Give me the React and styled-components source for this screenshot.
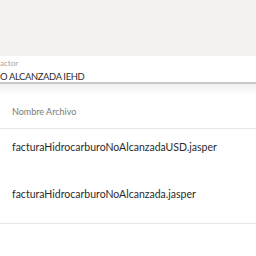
import React from 'react'
import styled, { createGlobalStyle } from 'styled-components'

const Global = createGlobalStyle`
  body {
    margin: 0;
    background: #ffffff;
    font-family: Lato, "Open Sans", sans-serif;
  }
`
const Page = styled.div`
  width: 256px;
  height: 256px;
  overflow: hidden;
  display: flex;
  flex-direction: column;
`
const TopBand = styled.div`
  height: 56px;
  background: #f4f2f0;
`
const Field = styled.div`
  height: 26px;
  background: #ffffff;
  border-bottom: 2px solid #c9c9c9;
  overflow: hidden;
  display: flex;
  flex-direction: column;
`
const FieldLabel = styled.div`
  margin-top: 2px;
  font-size: 8px;
  line-height: 10px;
  color: #a3a3a3;
  white-space: nowrap;
`
const FieldValue = styled.div`
  margin-top: 3px;
  font-size: 9.4px;
  letter-spacing: -0.35px;
  line-height: 12px;
  color: #2e2e2e;
  white-space: nowrap;
`
const Shade = styled.div`
  height: 11px;
  background: linear-gradient(#efefef, #ffffff);
`
const Table = styled.div`
  display: flex;
  flex-direction: column;
  border-bottom: 1px solid #e6e6e6;
`
const HeadRow = styled.div`
  height: 33px;
  padding-left: 12px;
  display: flex;
  align-items: center;
  border-bottom: 1px solid #e6e6e6;
  font-size: 9px;
  color: #7a7a7a;
`
const Row = styled.div`
  height: ${p => p.h}px;
  padding-left: 12px;
  display: flex;
  align-items: center;
  font-size: 10.5px;
  color: #2b2b2b;
  white-space: nowrap;
`

export default function App() {
  return (
    <Page>
      <Global />
      <TopBand />
      <Field>
        <FieldLabel>actor</FieldLabel>
        <FieldValue>O ALCANZADA IEHD</FieldValue>
      </Field>
      <Shade />
      <Table>
        <HeadRow>Nombre Archivo</HeadRow>
        <Row h={36}>facturaHidrocarburoNoAlcanzadaUSD.jasper</Row>
        <Row h={58}>facturaHidrocarburoNoAlcanzada.jasper</Row>
      </Table>
    </Page>
  )
}
